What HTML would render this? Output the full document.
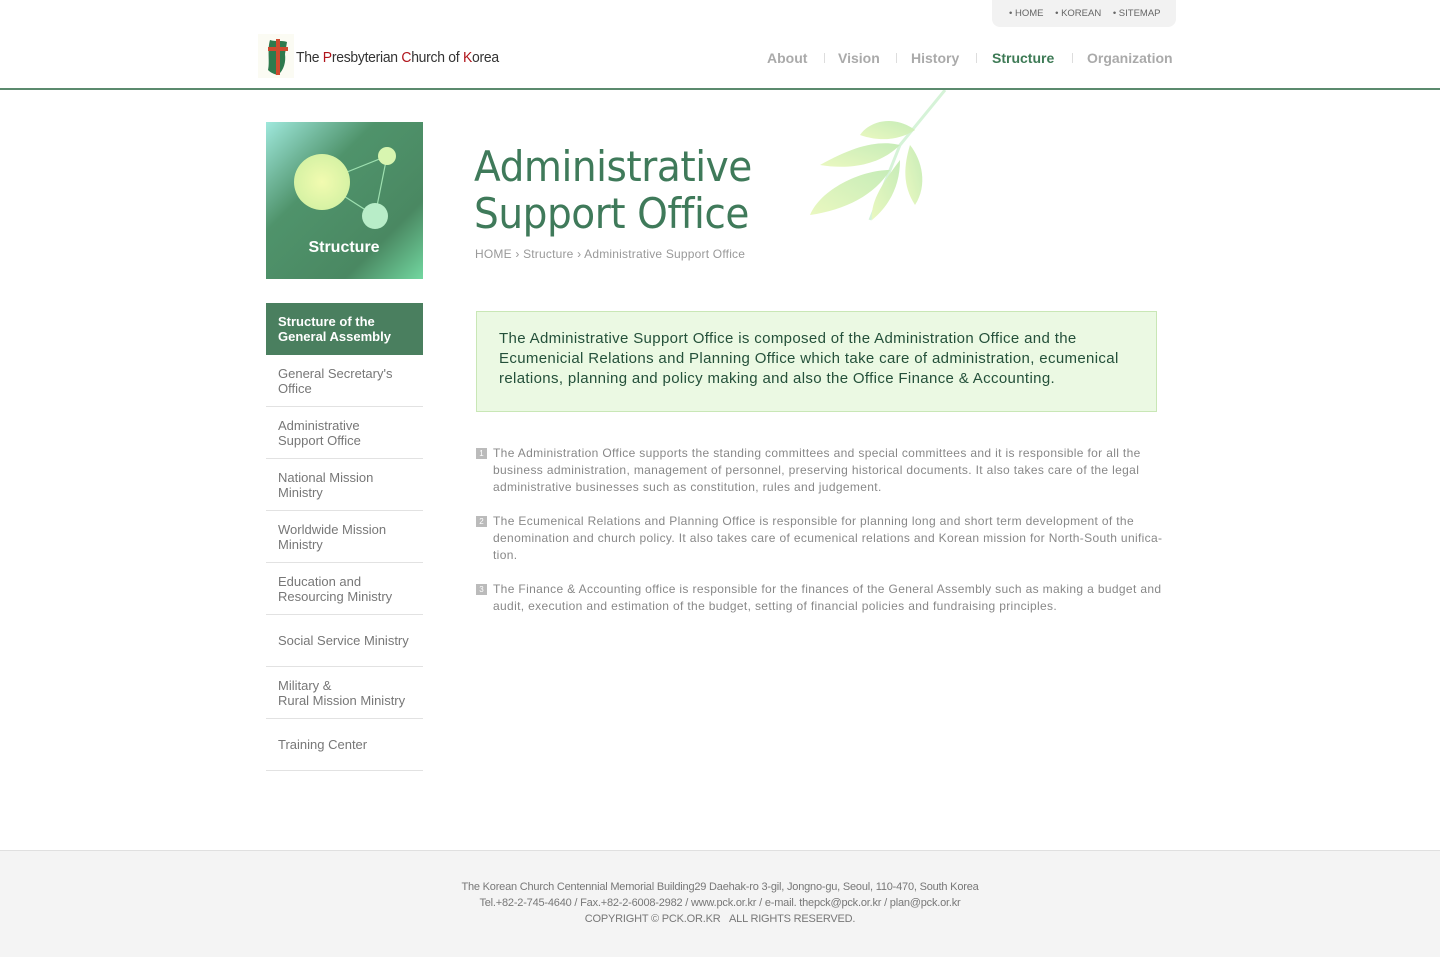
<!DOCTYPE html>
<html><head><meta charset="utf-8"><style>
*{margin:0;padding:0;box-sizing:border-box}
body{width:1440px;height:957px;position:relative;background:#fff;font-family:"Liberation Sans","DejaVu Sans",sans-serif;overflow:hidden}
.abs{position:absolute}
.top{left:992px;top:0;width:184px;height:27px;background:#f2f2f2;border-radius:0 0 8px 8px;font-size:9.5px;color:#666;padding-top:8px;padding-left:17px;word-spacing:0}
.top span{margin-right:9px}
.hline{left:0;top:88px;width:1440px;height:2px;background:#5b8a6d}
.nav{top:50px;font-size:14px;font-weight:bold;color:#aaa}
.sep{top:53px;width:1px;height:10px;background:#ddd}
.menu{left:266px;width:157px}
.mi{height:52px;border-bottom:1px solid #e2e2e2;font-size:13px;color:#777;line-height:15px;padding:0 12px;display:flex;align-items:center}
.mi.act{background:#4a7f5f;color:#fff;font-weight:bold;border:none}
.p{left:476px;width:720px;font-size:12px;line-height:17px;color:#888;padding-left:17px;letter-spacing:0.35px}
.p b{position:absolute;left:0;top:3px;width:11px;height:11px;background:#bbb;color:#fff;font-size:8px;line-height:11px;text-align:center;font-weight:normal;letter-spacing:0}
</style></head><body>
<div class="abs top"><span>• HOME</span> <span>• KOREAN</span> <span>• SITEMAP</span></div>
<svg class="abs" style="left:258px;top:34px" width="36" height="44" viewBox="0 0 36 44">
<rect width="36" height="44" fill="#fbfbf3"/>
<path d="M12 6 C18 8 24 6 29 8 L27 20 C28 28 26 36 20 41 C15 40 12 38 10 36 C12 28 9 16 12 6Z" fill="#2e7a4e"/>
<rect x="18" y="5" width="4" height="36" fill="#cf4a2f"/>
<rect x="10" y="13" width="20" height="4" fill="#cf4a2f"/>
</svg>
<div class="abs" style="left:296px;top:49px;font-size:15px;color:#333;letter-spacing:-0.3px;transform:scaleX(0.93);transform-origin:left">The <span style="color:#b0141b">P</span>resbyterian <span style="color:#b0141b">C</span>hurch of <span style="color:#b0141b">K</span>orea</div>
<div class="abs nav" style="left:767px">About</div>
<div class="abs sep" style="left:824px"></div>
<div class="abs nav" style="left:838px">Vision</div>
<div class="abs sep" style="left:896px"></div>
<div class="abs nav" style="left:911px">History</div>
<div class="abs sep" style="left:976px"></div>
<div class="abs nav" style="left:992px;color:#3d7a55">Structure</div>
<div class="abs sep" style="left:1072px"></div>
<div class="abs nav" style="left:1087px">Organization</div>
<div class="abs hline"></div>

<svg class="abs" style="left:800px;top:90px" width="150" height="135" viewBox="0 0 150 135">
<defs><linearGradient id="lf" x1="0" y1="1" x2="1" y2="0"><stop offset="0" stop-color="#eaf8c0"/><stop offset="1" stop-color="#c6ecb8"/></linearGradient></defs>
<path d="M145 0 L100 55 L70 130" stroke="#d6f3d8" stroke-width="3" fill="none"/>
<path d="M115 40 C95 25 70 30 60 45 C80 52 100 50 115 40Z" fill="url(#lf)"/>
<path d="M100 55 C80 50 55 55 20 75 C50 80 80 75 100 55Z" fill="url(#lf)"/>
<path d="M90 80 C60 80 20 100 10 125 C45 120 75 105 90 80Z" fill="url(#lf)"/>
<path d="M100 70 C85 90 70 110 72 130 C90 115 100 95 100 70Z" fill="url(#lf)"/>
<path d="M110 55 C122 70 128 95 115 115 C102 95 104 75 110 55Z" fill="url(#lf)"/>
</svg>

<svg class="abs" style="left:266px;top:122px" width="157" height="157" viewBox="0 0 157 157">
<defs><linearGradient id="bg" x1="0" y1="0" x2="1" y2="1"><stop offset="0" stop-color="#9fe8dc"/><stop offset="0.35" stop-color="#4f936b"/><stop offset="0.75" stop-color="#4a8862"/><stop offset="1" stop-color="#72d7a0"/></linearGradient>
<radialGradient id="c1"><stop offset="0" stop-color="#f2fbb0"/><stop offset="1" stop-color="#d6f2a4"/></radialGradient></defs>
<rect width="157" height="157" fill="url(#bg)"/>
<path d="M56 60 L121 34 L109 94 Z" stroke="#9ee0b0" stroke-width="1.2" fill="none"/>
<circle cx="56" cy="60" r="28" fill="url(#c1)"/>
<circle cx="121" cy="34" r="9" fill="#d8f5b0"/>
<circle cx="109" cy="94" r="13" fill="#b8edc8"/>
<text x="78" y="130" text-anchor="middle" font-family="Liberation Sans,sans-serif" font-weight="bold" font-size="16" fill="#fff">Structure</text>
</svg>

<div class="abs menu" style="top:303px">
<div class="mi act">Structure of the<br>General Assembly</div>
<div class="mi">General Secretary's<br>Office</div>
<div class="mi">Administrative<br>Support Office</div>
<div class="mi">National Mission<br>Ministry</div>
<div class="mi">Worldwide Mission<br>Ministry</div>
<div class="mi">Education and<br>Resourcing Ministry</div>
<div class="mi">Social Service Ministry</div>
<div class="mi">Military &amp;<br>Rural Mission Ministry</div>
<div class="mi">Training Center</div>
</div>

<div class="abs" style="left:474px;top:143px;font-size:42px;line-height:47px;color:#3f7a5a;font-family:'DejaVu Sans',sans-serif;letter-spacing:-0.5px;transform:scaleX(0.93);transform-origin:left">Administrative<br>Support Office</div>
<div class="abs" style="left:475px;top:247px;font-size:12px;color:#999;letter-spacing:0.2px">HOME › Structure › Administrative Support Office</div>

<div class="abs" style="left:476px;top:311px;width:681px;height:101px;background:#ebf9e3;border:1px solid #c9e7b6;padding:17px 0 17px 22px;font-size:15px;line-height:20px;color:#24503a;letter-spacing:0.35px;white-space:nowrap">The Administrative Support Office is composed of the Administration Office and the<br>Ecumenicial Relations and Planning Office which take care of administration, ecumenical<br>relations, planning and policy making and also the Office Finance &amp; Accounting.</div>

<div class="abs p" style="top:445px"><b>1</b>The Administration Office supports the standing committees and special committees and it is responsible for all the<br>business administration, management of personnel, preserving historical documents. It also takes care of the legal<br>administrative businesses such as constitution, rules and judgement.</div>
<div class="abs p" style="top:513px"><b>2</b>The Ecumenical Relations and Planning Office is responsible for planning long and short term development of the<br>denomination and church policy. It also takes care of ecumenical relations and Korean mission for North-South unifica-<br>tion.</div>
<div class="abs p" style="top:581px"><b>3</b>The Finance &amp; Accounting office is responsible for the finances of the General Assembly such as making a budget and<br>audit, execution and estimation of the budget, setting of financial policies and fundraising principles.</div>

<div class="abs" style="left:0;top:850px;width:1440px;height:107px;background:#f4f4f4;border-top:1px solid #e0e0e0;text-align:center;font-size:11px;line-height:16px;color:#777;padding-top:28px;letter-spacing:-0.2px">The Korean Church Centennial Memorial Building29 Daehak-ro 3-gil, Jongno-gu, Seoul, 110-470, South Korea<br>Tel.+82-2-745-4640 / Fax.+82-2-6008-2982 / www.pck.or.kr / e-mail. thepck@pck.or.kr / plan@pck.or.kr<br>COPYRIGHT © PCK.OR.KR &nbsp;&nbsp;ALL RIGHTS RESERVED.</div>
</body></html>
